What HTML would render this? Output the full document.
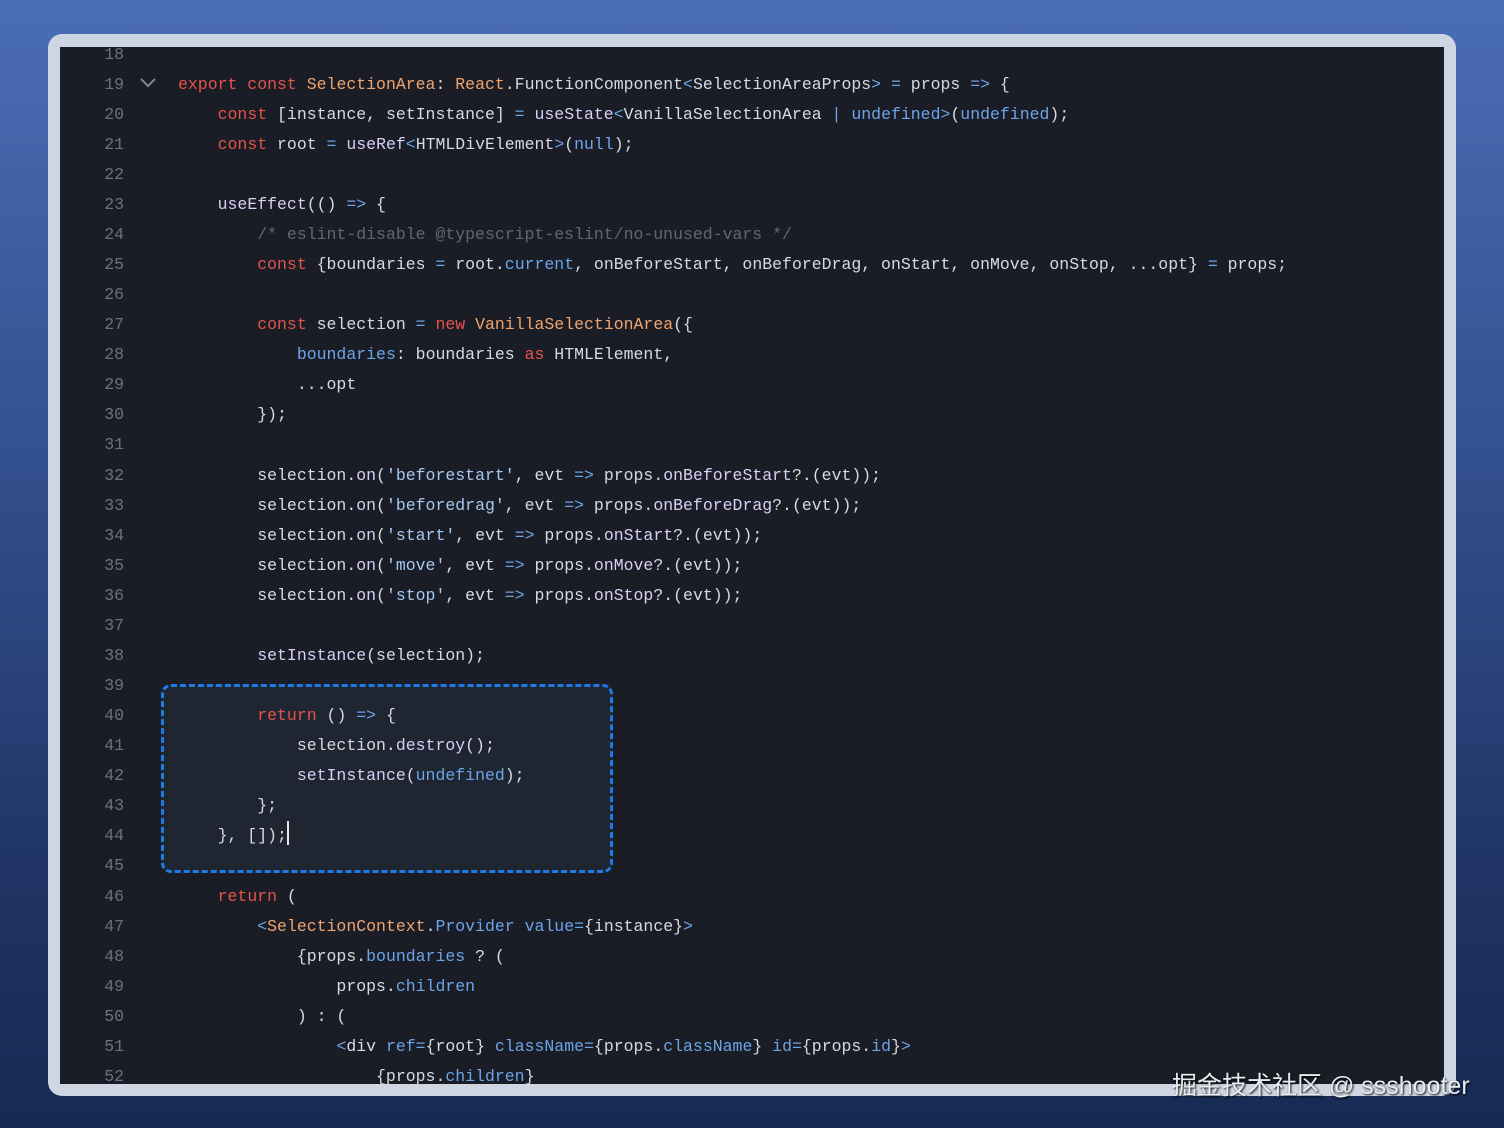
<!DOCTYPE html>
<html><head><meta charset="utf-8"><style>
*{margin:0;padding:0;box-sizing:border-box}
html,body{width:1504px;height:1128px;overflow:hidden}
body{background:linear-gradient(180deg,#4b6cb7 0%,#33518f 40%,#1f3363 80%,#172a52 100%);position:relative;font-family:"Liberation Mono",monospace}
.frame{position:absolute;left:48px;top:34px;width:1408px;height:1062px;background:#cfd6e3;border-radius:14px}
.code{position:absolute;left:60px;top:47px;width:1384px;height:1037px;background:#1a1d25;overflow:hidden}
.ln{position:absolute;left:0;width:64px;text-align:right;color:#6b7380;font-size:16.5px;line-height:30px}
.l{position:absolute;left:118px;white-space:pre;color:#d6dae2;font-size:16.5px;line-height:30px}
.k{color:#e5534b}.t{color:#f0a46e}.b{color:#6ca4e8}.f{color:#d8cff5}.c{color:#5f6773}.s{color:#a5c8f0}.o{color:#6ca4e8}
.box{position:absolute;left:101px;top:637px;width:452px;height:189px;border:3px dashed #1e7be6;border-radius:10px;background:#1f2631}
.cur{display:inline-block;width:2px;height:24px;background:#e6e6e6;vertical-align:-5px}
.wm{position:absolute;left:1172px;top:1066px;font-family:"Liberation Sans","Noto Sans CJK SC",sans-serif;font-size:25px;color:#e8ebf0;text-shadow:1px 1px 2px #000;white-space:nowrap}
</style></head><body>
<div class="frame"></div>
<div class="code">
<div class="box"></div>
<svg style="position:absolute;left:79px;top:30px" width="18" height="12"><path d="M2 2 L9 9 L16 2" stroke="#7f8692" stroke-width="2" fill="none"/></svg>
<div class="ln" style="top:-7px">18</div>
<div class="ln" style="top:23px">19</div>
<div class="ln" style="top:53px">20</div>
<div class="ln" style="top:83px">21</div>
<div class="ln" style="top:113px">22</div>
<div class="ln" style="top:143px">23</div>
<div class="ln" style="top:173px">24</div>
<div class="ln" style="top:203px">25</div>
<div class="ln" style="top:233px">26</div>
<div class="ln" style="top:263px">27</div>
<div class="ln" style="top:293px">28</div>
<div class="ln" style="top:323px">29</div>
<div class="ln" style="top:353px">30</div>
<div class="ln" style="top:383px">31</div>
<div class="ln" style="top:414px">32</div>
<div class="ln" style="top:444px">33</div>
<div class="ln" style="top:474px">34</div>
<div class="ln" style="top:504px">35</div>
<div class="ln" style="top:534px">36</div>
<div class="ln" style="top:564px">37</div>
<div class="ln" style="top:594px">38</div>
<div class="ln" style="top:624px">39</div>
<div class="ln" style="top:654px">40</div>
<div class="ln" style="top:684px">41</div>
<div class="ln" style="top:714px">42</div>
<div class="ln" style="top:744px">43</div>
<div class="ln" style="top:774px">44</div>
<div class="ln" style="top:804px">45</div>
<div class="ln" style="top:835px">46</div>
<div class="ln" style="top:865px">47</div>
<div class="ln" style="top:895px">48</div>
<div class="ln" style="top:925px">49</div>
<div class="ln" style="top:955px">50</div>
<div class="ln" style="top:985px">51</div>
<div class="ln" style="top:1015px">52</div>

<div class="l" style="top:23px"><span class="k">export const </span><span class="t">SelectionArea</span>: <span class="t">React</span>.FunctionComponent<span class="o">&lt;</span>SelectionAreaProps<span class="o">&gt;</span> <span class="o">=</span> props <span class="o">=&gt;</span> {</div>
<div class="l" style="top:53px">    <span class="k">const</span> [instance, setInstance] <span class="o">=</span> <span class="f">useState</span><span class="o">&lt;</span>VanillaSelectionArea <span class="o">|</span> <span class="b">undefined</span><span class="o">&gt;</span>(<span class="b">undefined</span>);</div>
<div class="l" style="top:83px">    <span class="k">const</span> root <span class="o">=</span> <span class="f">useRef</span><span class="o">&lt;</span>HTMLDivElement<span class="o">&gt;</span>(<span class="b">null</span>);</div>
<div class="l" style="top:143px">    <span class="f">useEffect</span>(() <span class="o">=&gt;</span> {</div>
<div class="l" style="top:173px">        <span class="c">/* eslint-disable @typescript-eslint/no-unused-vars */</span></div>
<div class="l" style="top:203px">        <span class="k">const</span> {boundaries <span class="o">=</span> root.<span class="b">current</span>, onBeforeStart, onBeforeDrag, onStart, onMove, onStop, ...opt} <span class="o">=</span> props;</div>
<div class="l" style="top:263px">        <span class="k">const</span> selection <span class="o">=</span> <span class="k">new</span> <span class="t">VanillaSelectionArea</span>({</div>
<div class="l" style="top:293px">            <span class="b">boundaries</span>: boundaries <span class="k">as</span> HTMLElement,</div>
<div class="l" style="top:323px">            ...opt</div>
<div class="l" style="top:353px">        });</div>
<div class="l" style="top:414px">        selection.<span class="f">on</span>(<span class="s">'beforestart'</span>, evt <span class="o">=&gt;</span> props.<span class="f">onBeforeStart</span>?.(evt));</div>
<div class="l" style="top:444px">        selection.<span class="f">on</span>(<span class="s">'beforedrag'</span>, evt <span class="o">=&gt;</span> props.<span class="f">onBeforeDrag</span>?.(evt));</div>
<div class="l" style="top:474px">        selection.<span class="f">on</span>(<span class="s">'start'</span>, evt <span class="o">=&gt;</span> props.<span class="f">onStart</span>?.(evt));</div>
<div class="l" style="top:504px">        selection.<span class="f">on</span>(<span class="s">'move'</span>, evt <span class="o">=&gt;</span> props.<span class="f">onMove</span>?.(evt));</div>
<div class="l" style="top:534px">        selection.<span class="f">on</span>(<span class="s">'stop'</span>, evt <span class="o">=&gt;</span> props.<span class="f">onStop</span>?.(evt));</div>
<div class="l" style="top:594px">        <span class="f">setInstance</span>(selection);</div>
<div class="l" style="top:654px">        <span class="k">return</span> () <span class="o">=&gt;</span> {</div>
<div class="l" style="top:684px">            selection.<span class="f">destroy</span>();</div>
<div class="l" style="top:714px">            <span class="f">setInstance</span>(<span class="b">undefined</span>);</div>
<div class="l" style="top:744px">        };</div>
<div class="l" style="top:774px">    }, []);<span class="cur"></span></div>
<div class="l" style="top:835px">    <span class="k">return</span> (</div>
<div class="l" style="top:865px">        <span class="o">&lt;</span><span class="t">SelectionContext</span>.<span class="b">Provider</span> <span class="b">value</span><span class="o">=</span>{instance}<span class="o">&gt;</span></div>
<div class="l" style="top:895px">            {props.<span class="b">boundaries</span> ? (</div>
<div class="l" style="top:925px">                props.<span class="b">children</span></div>
<div class="l" style="top:955px">            ) : (</div>
<div class="l" style="top:985px">                <span class="o">&lt;</span>div <span class="b">ref</span><span class="o">=</span>{root} <span class="b">className</span><span class="o">=</span>{props.<span class="b">className</span>} <span class="b">id</span><span class="o">=</span>{props.<span class="b">id</span>}<span class="o">&gt;</span></div>
<div class="l" style="top:1015px">                    {props.<span class="b">children</span>}</div>
</div>
<div class="wm">掘金技术社区 @ ssshooter</div>
</body></html>
